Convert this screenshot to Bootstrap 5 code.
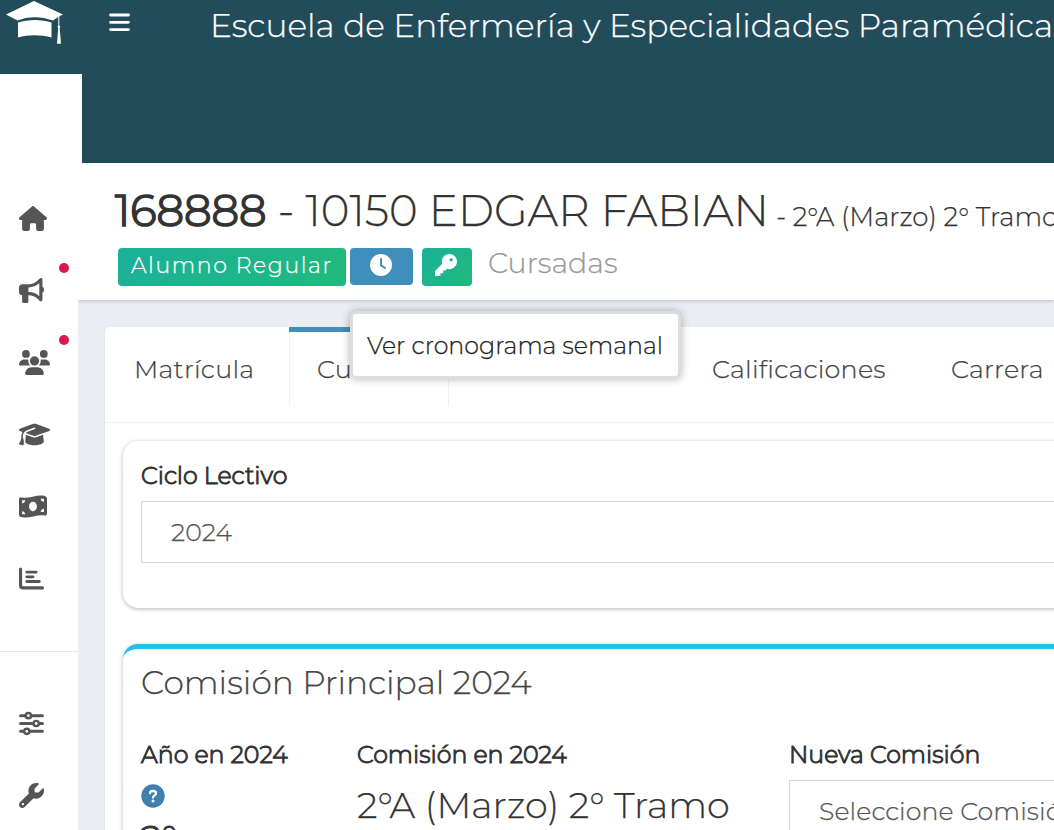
<!DOCTYPE html>
<html lang="es">
<head>
  <meta charset="UTF-8" />
  <title>Cursadas</title>
  <link href="https://cdn.jsdelivr.net/npm/bootstrap@5.3.0/dist/css/bootstrap.min.css" rel="stylesheet" />
  <style>
    body { font-family: Montserrat, Inter, "Open Sans", sans-serif; font-weight: 300; color: #333; background: #eaeef3; height: 830px; overflow: hidden; -webkit-text-stroke: .25px; }
    svg { display: block; fill: currentColor; }
    .t { white-space: nowrap; line-height: 40px; }

    .topbar { height: 163px; background: #224c5a; color: #fff; overflow: hidden; }
    .brand { width: 82px; }
    .brand-logo { height: 74px; background: #224c5a; padding: 1px 0 0 6px; }
    .menu-btn { padding: 13px 0 0 27px; width: 130px; }
    .school { font-size: 32.8px; padding-top: 5px; margin-left: -2px; }

    .side { width: 78px; height: 667px; padding-top: 20px; color: #555; }
    .side a { height: 72px; padding: 23px 0 0 19px; display: block; color: #555; position: relative; }
    .side .dot { position: absolute; left: 59px; top: 8px; width: 10px; height: 10px; border-radius: 50%; background: #d81b4a; }
    .side hr { margin: 36px 0; border-color: #e6e8ea; opacity: 1; }

    .page-head { height: 137px; padding: 23px 0 0 37px; box-shadow: 0 1px 4px rgba(0,0,0,.2); position: relative; z-index: 2; }
    .alumno { font-size: 43.5px; line-height: 50px; margin: 0 0 12px; font-weight: 300; }
    .alumno b { font-weight: 300; -webkit-text-stroke: 1.7px; }
    .alumno .curso { font-size: 26px; line-height: 1; margin-left: -4px; }
    .pill { height: 38px; border-radius: 4px; color: #fff; background: linear-gradient(135deg, #1bb09b, #20ba7b); }
    .estado { width: 228px; margin-left: 3px; font-size: 22px; letter-spacing: 1.6px; line-height: 36px; padding-left: 13px; }
    .crono { width: 63px; height: 37px; margin-left: 4px; background: #408ebb; position: relative; padding: 6px 0 0 20px; }
    .llave { width: 50px; margin-left: 9px; padding: 6px 0 0 13px; }
    .seccion { font-size: 28.5px; color: #999; margin-left: 16px; line-height: 30px; }
    .tip { position: absolute; left: 0; top: 63px; width: 331px; height: 68px; background: #fff; border: 3px solid #ddd; border-radius: 6px; box-shadow: 0 0 9px rgba(0,0,0,.3); color: #222; font-size: 23.7px; line-height: 64px; padding-left: 14px; z-index: 5; white-space: nowrap; }

    .panel { width: 1340px; height: 520px; margin: 27px 0 0 27px; background: #fff; border-radius: 5px 0 0 0; box-shadow: 0 1px 2px rgba(0,0,0,.12); }
    .tabs { height: 96px; border-bottom: 1px solid #f2f2f2; font-size: 25.4px; letter-spacing: .25px; color: #444; }
    .tabs div { line-height: 83px; }
    .tab-1 { width: 184px; padding-left: 29px; }
    .tab-2 { width: 160px; height: 79px; border: solid #f0f0f0; border-width: 0 1px; padding-left: 27px; }
    .tab-2::before { content: ""; display: block; height: 5px; margin: 0 -1px -5px -28px; background: #408ebb; }
    .tab-3 { width: 239px; margin-left: 263px; }

    .box { width: 1296px; margin-left: 18px; border-radius: 15px; background: #fff; box-shadow: 0 1px 4px rgba(0,0,0,.3); }
    .box-ciclo { height: 167px; margin-top: 18px; padding: 15px 18px 0; }
    .box-comision { height: 300px; margin-top: 36px; border-top: 5px solid #20c0ef; padding-top: 13px; }
    .lbl { font-size: 23.7px; -webkit-text-stroke: 1px; }
    .campo { height: 62px; margin-top: 5px; border: 1px solid #d2d6de; color: #555; font-size: 25.2px; letter-spacing: .1px; line-height: 60px; padding-left: 29px; white-space: nowrap; }
    .box-title { font-size: 32.8px; color: #444; padding-left: 18px; }
    .fila { margin: 0; padding-top: 33px; }
    .fila > div { padding: 0 18px; }
    .ayuda { margin-top: 9px; }
    .valor { font-size: 36.5px; padding-top: 10px; }
    .valor-anio { -webkit-text-stroke: 1px; }
  </style>
</head>
<body>
  <header class="topbar d-flex">
    <div class="brand bg-white flex-shrink-0">
      <div class="brand-logo">
        <svg width="58" height="44" viewBox="0 0 58 44"><path d="M28 0L57 13.500L53.500 15.300L47 19.500C35 15 22 15 11.500 19.500L0 13.500ZM12 21.500C22 18 36 18 45.500 21.500V36.500C35 33.500 22 33.500 12 36.500Z"/><path d="M52.300 15h1v9.500a1.600 1.600 0 0 1 .4 2.600L55 42.800h-4l1.200-15.700a1.600 1.600 0 0 1 .1-2.600Z"/></svg>
      </div>
    </div>
    <div class="menu-btn flex-shrink-0">
      <svg width="21" height="19" stroke="#fff" stroke-width="2.8" stroke-linecap="round"><path d="M1.500 2H19.500M1.500 9.300H19.500M1.500 16.600H19.500"/></svg>
    </div>
    <div class="school t">Escuela de Enfermería y Especialidades Paramédicas</div>
  </header>

  <div class="d-flex">
    <nav class="side bg-white flex-shrink-0 position-relative z-3">
      <a><svg width="28" height="25" viewBox="0 0 576 512"><path d="M575.8 255.500c0 18-15 32.100-32 32.100h-32l.7 160.200c0 2.700-.2 5.400-.5 8.100V472c0 22.100-17.900 40-40 40H392c-22.100 0-40-17.900-40-40V384c0-17.700-14.300-32-32-32H256c-17.700 0-32 14.300-32 32v88c0 22.100-17.900 40-40 40H104c-22.100 0-40-17.900-40-40V287.600H32c-18 0-32-14-32-32.100c0-9 3-17 10-24L266.400 8c7-7 15-8 22-8s15 2 21 7L564.800 231.500c8 7 12 15 11 24z"/></svg></a>
      <a><span class="dot"></span><svg width="25" height="25" viewBox="0 0 512 512"><path d="M480 32c0-12.900-7.800-24.600-19.800-29.600s-25.700-2.200-34.900 6.900L381.700 53c-48 48-113.100 75-181 75H64c-35.300 0-64 28.700-64 64v96c0 35.300 28.700 64 64 64v128c0 17.700 14.300 32 32 32h64c17.700 0 32-14.300 32-32V352h8.700c67.900 0 133 27 181 75l43.600 43.600c9.200 9.200 22.900 11.900 34.900 6.900s19.800-16.600 19.800-29.600V300.400c18.600-8.800 32-32.500 32-60.400s-13.400-51.600-32-60.400V32zm-64 76.700V371.300C357.200 317.800 280.500 288 200.700 288H192V192h8.700c79.800 0 156.500-29.800 215.300-83.300z"/></svg></a>
      <a><span class="dot"></span><svg width="31" height="25" viewBox="0 0 640 512"><path d="M144 0a80 80 0 1 1 0 160A80 80 0 1 1 144 0zM512 0a80 80 0 1 1 0 160A80 80 0 1 1 512 0zM0 298.700C0 239.800 47.800 192 106.700 192h42.700c15.900 0 31 3.500 44.600 9.700c-1.300 7.200-1.900 14.700-1.900 22.300c0 38.200 16.800 72.500 43.300 96H21.300C9.600 320 0 310.400 0 298.700zM404.600 320c26.600-23.500 43.300-57.800 43.300-96c0-7.600-.7-15-1.900-22.300c13.600-6.300 28.700-9.700 44.600-9.700h42.700C592.200 192 640 239.800 640 298.700c0 11.800-9.600 21.300-21.300 21.300H404.600zM224 224a96 96 0 1 1 192 0 96 96 0 1 1 -192 0zM128 485.300C128 411.700 187.700 352 261.300 352H378.700C452.300 352 512 411.700 512 485.300c0 14.700-11.900 26.700-26.700 26.700H154.700c-14.700 0-26.700-11.900-26.700-26.700z"/></svg></a>
      <a><svg width="31" height="25" viewBox="0 0 640 512"><path d="M320 32c-8.100 0-16.100 1.400-23.700 4.100L15.800 137.400C6.300 140.900 0 149.900 0 160s6.300 19.100 15.800 22.600l57.900 20.900C57.300 229.300 48 259.800 48 291.900v28.100c0 28.400-10.800 57.700-22.300 80.800c-6.500 13-13.900 25.800-22.500 37.600C0 442.700-.9 448.300 .9 453.400s6 8.900 11.200 10.200l64 16c4.200 1.100 8.700 .3 12.400-2s6.300-6.100 7.100-10.400c8.600-42.800 4.300-81.200-2.100-108.700C90.300 344.300 86 329.800 80 316.500V291.900c0-30.200 10.200-58.700 27.900-81.500c12.900-15.500 29.600-28 49.200-35.700l157-61.700c8.200-3.200 17.500 .8 20.700 9s-.8 17.500-9 20.700l-157 61.700c-12.400 4.900-23.300 12.400-32.200 21.600l159.600 57.600c7.600 2.700 15.600 4.100 23.700 4.100s16.100-1.400 23.700-4.100L624.200 182.600c9.500-3.400 15.800-12.500 15.800-22.600s-6.300-19.100-15.800-22.600L343.700 36.100C336.100 33.400 328.100 32 320 32zM128 408c0 35.300 86 72 192 72s192-36.700 192-72L496.700 262.600 354.500 314c-11.100 4-22.800 6-34.500 6s-23.500-2-34.500-6L143.300 262.600 128 408z"/></svg></a>
      <a><svg width="28" height="25" viewBox="0 0 576 512" fill-rule="evenodd"><path d="M0 112C0 85 20 64 46 69C207 105 369 -5 530 38C558 46 576 66 576 94V400C576 427 556 448 530 443C369 407 207 517 46 474C18 466 0 446 0 418ZM288 352c44 0 80-43 80-96s-36-96-80-96-80 43-80 96 36 96 80 96ZM64 416H128C128 381 99 352 64 352ZM128 128H64v64c35 0 64-29 64-64ZM512 304c-35 0-64 29-64 64h64ZM448 96c0 35 29 64 64 64V96Z"/></svg></a>
      <a><svg width="25" height="25" viewBox="0 0 512 512" stroke="currentColor" stroke-width="64" stroke-linecap="round" stroke-linejoin="round"><path fill="none" d="M32 64V400Q32 448 80 448H480"/><path fill="none" stroke-width="58" d="M160 125H352M160 221H288M160 317H416"/></svg></a>
      <hr>
      <a><svg width="25" height="25" viewBox="0 0 512 512" stroke="currentColor" stroke-width="62" stroke-linecap="round"><path d="M32 96H480M32 256H480M32 416H480"/><g fill="#fff" stroke-width="50"><circle cx="192" cy="96" r="54"/><circle cx="352" cy="256" r="54"/><circle cx="160" cy="416" r="54"/></g></svg></a>
      <a><svg width="25" height="25" viewBox="0 0 512 512"><path d="M352 320c88.400 0 160-71.600 160-160c0-15.300-2.200-30.100-6.200-44.200c-3.100-10.800-16.400-13.200-24.300-5.300l-76.800 76.800c-3 3-7.100 4.700-11.300 4.700H336c-8.800 0-16-7.200-16-16V118.600c0-4.200 1.700-8.300 4.700-11.300l76.800-76.800c7.900-7.900 5.400-21.200-5.300-24.300C382.100 2.200 367.300 0 352 0C263.600 0 192 71.600 192 160c0 19.100 3.400 37.500 9.500 54.500L19.900 396.100C7.200 408.800 0 426.100 0 444.100C0 481.600 30.400 512 67.900 512c18 0 35.300-7.200 48-19.900L297.500 310.500c17 6.200 35.400 9.500 54.500 9.500zM80 408a24 24 0 1 1 0 48 24 24 0 1 1 0-48z"/></svg></a>
    </nav>

    <main class="flex-fill overflow-hidden">
      <section class="page-head bg-white">
        <h1 class="alumno text-nowrap"><b>168888</b> - 10150 EDGAR FABIAN <span class="curso">- 2°A (Marzo) 2° Tramo</span></h1>
        <div class="d-flex">
          <div class="pill estado text-nowrap">Alumno Regular</div>
          <div class="pill crono">
            <svg width="22" height="22" viewBox="0 0 22 22"><circle cx="11" cy="11" r="11"/><path d="M11 5V11.200L15 14" fill="none" stroke="#408ebb" stroke-width="2" stroke-linecap="round"/></svg>
            <div class="tip">Ver cronograma semanal</div>
          </div>
          <div class="pill llave">
            <svg width="22" height="22" viewBox="0 0 512 512"><path d="M336 352c97.200 0 176-78.800 176-176S433.200 0 336 0S160 78.800 160 176c0 18.700 2.900 36.800 8.300 53.700L7 391c-4.500 4.500-7 10.600-7 17v80c0 13.300 10.700 24 24 24h80c13.300 0 24-10.700 24-24V448h40c13.300 0 24-10.700 24-24V384h40c6.400 0 12.500-2.500 17-7l33.300-33.300c16.900 5.400 35 8.300 53.700 8.300zM376 96a40 40 0 1 1 0 80 40 40 0 1 1 0-80z"/></svg>
          </div>
          <div class="seccion">Cursadas</div>
        </div>
      </section>

      <section class="panel">
        <div class="tabs d-flex">
          <div class="tab-1">Matrícula</div>
          <div class="tab-2">Cursadas</div>
          <div class="tab-3">Calificaciones</div>
          <div>Carrera</div>
        </div>

        <div class="box box-ciclo">
          <div class="lbl t">Ciclo Lectivo</div>
          <div class="campo">2024</div>
        </div>

        <div class="box box-comision">
          <div class="box-title t">Comisión Principal 2024</div>
          <div class="row fila">
            <div class="col-2">
              <div class="lbl t">Año en 2024</div>
              <svg class="ayuda" width="24" height="24" viewBox="0 0 24 24"><circle cx="12" cy="12" r="11.700" fill="#3c80ab"/><path d="M9 9.200C9 7.500 10.300 7 12 7S15 7.800 15 9.600 12 11.400 12 13.600" fill="none" stroke="#fff" stroke-width="2.300" stroke-linecap="round"/><circle cx="12" cy="17" r="1.500" fill="#fff"/></svg>
              <div class="valor valor-anio t">2°</div>
            </div>
            <div class="col-4">
              <div class="lbl t">Comisión en 2024</div>
              <div class="valor t">2°A (Marzo) 2° Tramo</div>
            </div>
            <div class="col-6">
              <div class="lbl t">Nueva Comisión</div>
              <div class="campo">Seleccione Comisión</div>
            </div>
          </div>
        </div>
      </section>
    </main>
  </div>

  <script src="https://cdn.jsdelivr.net/npm/bootstrap@5.3.0/dist/js/bootstrap.bundle.min.js"></script>
</body>
</html>
